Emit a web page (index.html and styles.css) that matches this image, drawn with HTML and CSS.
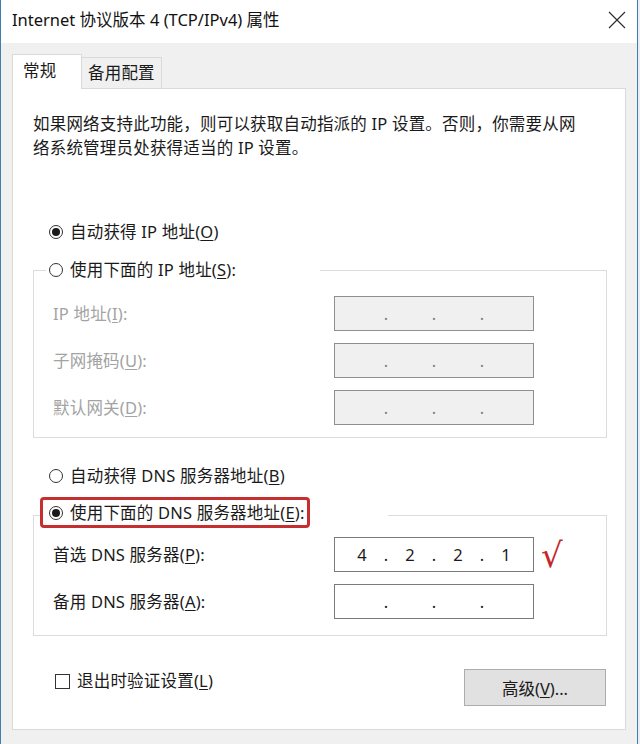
FILE: index.html
```html
<!DOCTYPE html>
<html lang="zh-CN">
<head>
    <meta charset="UTF-8">
    <meta name="viewport" content="width=device-width, initial-scale=1.0">
    <title>Internet 协议版本 4 (TCP/IPv4) 属性</title>
    <link rel="stylesheet" href="styles.css">
</head>
<body>
    <div class="window">
        <div class="titlebar">
            <span class="title">Internet 协议版本 4 (TCP/IPv4) 属性</span>
            <svg class="close" width="18" height="18" viewBox="0 0 18 18">
                <path d="M1 1 L17 17 M17 1 L1 17" stroke="#2b2b2b" stroke-width="1.1" fill="none"/>
            </svg>
        </div>
        <div class="content">
            <div class="tabs">
                <div class="tab active">常规</div>
                <div class="tab">备用配置</div>
            </div>
            <div class="panel">
                <p class="intro">如果网络支持此功能，则可以获取自动指派的 IP 设置。否则，你需要从网<br>络系统管理员处获得适当的 IP 设置。</p>

                <div class="radio-row ip-auto"><span class="radio on"></span>自动获得 IP 地址(<u>O</u>)</div>

                <fieldset class="group group-ip">
                    <legend class="legend-ip"><span class="radio"></span>使用下面的 IP 地址(<u>S</u>):</legend>
                    <div class="field off">
                        <span class="label">IP 地址(<u>I</u>):</span>
                        <div class="ipbox"><span></span><i>.</i><span></span><i>.</i><span></span><i>.</i><span></span></div>
                    </div>
                    <div class="field off">
                        <span class="label">子网掩码(<u>U</u>):</span>
                        <div class="ipbox"><span></span><i>.</i><span></span><i>.</i><span></span><i>.</i><span></span></div>
                    </div>
                    <div class="field off">
                        <span class="label">默认网关(<u>D</u>):</span>
                        <div class="ipbox"><span></span><i>.</i><span></span><i>.</i><span></span><i>.</i><span></span></div>
                    </div>
                </fieldset>

                <div class="radio-row dns-auto"><span class="radio"></span>自动获得 DNS 服务器地址(<u>B</u>)</div>

                <fieldset class="group group-dns">
                    <legend class="legend-dns"><span class="mark"><span class="radio on"></span>使用下面的 DNS 服务器地址(<u>E</u>):</span></legend>
                    <div class="field">
                        <span class="label">首选 DNS 服务器(<u>P</u>):</span>
                        <div class="ipbox"><span>4</span><i>.</i><span>2</span><i>.</i><span>2</span><i>.</i><span>1</span></div>
                        <span class="tick">√</span>
                    </div>
                    <div class="field">
                        <span class="label">备用 DNS 服务器(<u>A</u>):</span>
                        <div class="ipbox"><span></span><i>.</i><span></span><i>.</i><span></span><i>.</i><span></span></div>
                    </div>
                </fieldset>

                <div class="footer">
                    <div class="checkline"><span class="checkbox"></span>退出时验证设置(<u>L</u>)</div>
                    <button class="btn">高级(<u>V</u>)...</button>
                </div>
            </div>
        </div>
    </div>
</body>
</html>
```
FILE: styles.css
```css
html, body{
    margin: 0;
    padding: 0;
    background-color: #e9eef2;
}
body{
    font: 16.5px/24px "Noto Sans", "Noto Sans CJK SC", sans-serif;
    letter-spacing: 0.2px;
    color: #1a1a1a;
}
u{
    text-decoration-thickness: 1px;
    text-underline-offset: 2px;
}
.window
{
    width: 636px;
    border-left: 1px solid #3d7fae;
    border-right: 1px solid #3d7fae;
    background-color: #f0f0f0;
}
.titlebar{
    height: 43px;
    background-color: #ffffff;
    display: flex;
    align-items: center;
    justify-content: space-between;
    padding: 0 11px 3px 11px;
    box-sizing: border-box;
}
.title{
    font-size: 16.5px;
    letter-spacing: 0;
    color: #111111;
}
.close{
    display: block;
}
.content{
    padding: 12px 11px 14px 11px;
}
.tabs{
    display: flex;
    align-items: flex-end;
    height: 33px;
}
.tab{
    height: 30px;
    line-height: 30px;
    padding: 0 8px 0 6px;
    width: 65px;
    border: 1px solid #d9d9d9;
    border-bottom: none;
    border-left: none;
    background-color: #f0f0f0;
    white-space: nowrap;
}
.tab.active
{
    width: 58px;
    height: 34px;
    line-height: 32px;
    margin-bottom: -1px;
    padding: 0 0 0 10px;
    border-left: 1px solid #d9d9d9;
    border-right: 1px solid #d9d9d9;
    background-color: #ffffff;
    position: relative;
}
.panel{
    background-color: #ffffff;
    border: 1px solid #d9d9d9;
    padding: 23px 18px 23px 20px;
}
.intro{
    margin: 0;
    white-space: nowrap;
}
.radio-row{
    display: flex;
    align-items: center;
    height: 24px;
    padding-left: 16px;
}
.ip-auto{
    margin-top: 60px;
}
.dns-auto{
    margin-top: 26px;
}
.radio{
    width: 14px;
    height: 14px;
    border: 1px solid #333333;
    border-radius: 50%;
    box-sizing: border-box;
    margin-right: 7px;
    display: inline-flex;
    align-items: center;
    justify-content: center;
    flex: none;
    background-color: #ffffff;
}
.radio.on::after
{
    content: "";
    width: 8px;
    height: 8px;
    border-radius: 50%;
    background-color: #1a1a1a;
}
.group{
    margin: 0;
    min-inline-size: 0;
    border: 1px solid #dcdcdc;
}
.group-ip{
    margin-top: 14px;
    padding: 14px 0 12px 12px;
}
.group-dns{
    margin-top: 9px;
    padding: 3px 0 16px 6px;
}
legend{
    padding: 0;
    display: flex;
    align-items: center;
    white-space: nowrap;
}
.legend-ip{
    width: 271px;
    padding-left: 3px;
    height: 24px;
}
.legend-dns{
    width: 348px;
    height: 37px;
    align-items: flex-start;
}
.mark{
    display: inline-flex;
    align-items: center;
    height: 25px;
    border: 3px solid #c62f2f;
    border-radius: 4px;
    padding: 0 2px 0 6px;
}
.field{
    display: flex;
    align-items: center;
    height: 35px;
    margin-left: 7px;
}
.group-dns .field{
    margin-left: 13px;
}
.field + .field{
    margin-top: 12px;
}
.label{
    width: 281px;
    flex: none;
}
.off .label{
    color: #a3a3a3;
}
.ipbox{
    width: 200px;
    height: 35px;
    box-sizing: border-box;
    border: 1px solid #7a7a7a;
    background-color: #ffffff;
    display: flex;
    align-items: center;
    padding-left: 7px;
    flex: none;
}
.ipbox span{
    width: 40px;
    text-align: center;
}
.ipbox i{
    width: 8px;
    text-align: center;
    font-style: normal;
}
.off .ipbox{
    background-color: #f0f0f0;
    border-color: #8f8f8f;
    color: #808080;
}
.tick{
    margin-left: 7px;
    font: 34px/30px "DejaVu Sans", sans-serif;
    color: #c3272b;
}
.footer{
    display: flex;
    justify-content: space-between;
    align-items: flex-start;
    margin-top: 33px;
}
.checkline{
    display: flex;
    align-items: center;
    height: 24px;
    margin-top: 0;
    margin-left: 22px;
}
.checkbox{
    width: 15px;
    height: 15px;
    box-sizing: border-box;
    border: 1px solid #333333;
    margin-right: 7px;
}
.btn{
    width: 142px;
    height: 37px;
    margin-right: 1px;
    font: 16.5px "Noto Sans", "Noto Sans CJK SC", sans-serif;
    color: #1a1a1a;
    background-color: #e1e1e1;
    border: 1px solid #adadad;
}
```
